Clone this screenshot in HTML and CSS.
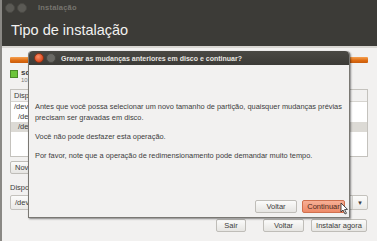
FILE: index.html
```html
<!DOCTYPE html>
<html lang="pt-BR">
<head>
    <meta charset="UTF-8">
    <title>Instalação</title>
    <link rel="stylesheet" href="styles.css">
</head>
<body>
    <div class="window">
        <div class="titlebar">
            <span class="tb-btn"></span>
            <span class="tb-btn"></span>
            <span class="tb-title">Instalação</span>
        </div>
        <div class="header">Tipo de instalação</div>
        <div class="content">
            <div class="usage-bar"></div>
            <div class="legend">
                <span class="swatch"></span>
                <div class="legend-text">
                    <div class="legend-name">sda1</div>
                    <div class="legend-size">10.0 GB</div>
                </div>
            </div>
            <div class="table">
                <div class="table-head">Dispositivo</div>
                <div class="row">/dev/sda</div>
                <div class="row sub">/dev/sda1</div>
                <div class="row sub selected">/dev/sda5</div>
                <div class="row"></div>
            </div>
            <div class="tools">
                <span class="btn">Nova tabela</span>
            </div>
            <div class="label">Dispositivo</div>
            <div class="combo">
                <span>/dev/sda</span>
                <span class="arrow">▾</span>
            </div>
        </div>
        <div class="footer">
            <span class="btn quit">Sair</span>
            <span class="btn back">Voltar</span>
            <span class="btn install">Instalar agora</span>
        </div>
    </div>

    <div class="dialog">
        <div class="dlg-titlebar">
            <span class="dlg-close"></span>
            <span class="dlg-min"></span>
            <span class="dlg-title">Gravar as mudanças anteriores em disco e continuar?</span>
        </div>
        <div class="dlg-body">
            <p>Antes que você possa selecionar um novo tamanho de partição, quaisquer mudanças prévias precisam ser gravadas em disco.</p>
            <p>Você não pode desfazer esta operação.</p>
            <p>Por favor, note que a operação de redimensionamento pode demandar muito tempo.</p>
        </div>
        <div class="dlg-buttons">
            <span class="btn dlg-back">Voltar</span>
            <span class="btn dlg-next">Continuar</span>
        </div>
        <svg class="cursor" width="9" height="13" viewBox="0 0 9 13">
            <path d="M1 1 L1 10 L3 8 L5 12 L6.5 11.3 L4.6 7.6 L7.5 7.4 Z" fill="#fff" stroke="#222" stroke-width="0.8"/>
        </svg>
    </div>
</body>
</html>
```

FILE: styles.css
```css
body {
    margin: 0;
    padding: 0;
    width: 377px;
    height: 241px;
    overflow: hidden;
    font-family: 'Liberation Sans', 'DejaVu Sans', sans-serif;
    background: #f2f1f0;
    position: relative;
}

.window {
    width: 377px;
    height: 241px;
    display: flex;
    flex-direction: column;
    background: #f2f1f0;
    border-left: 2px solid #8a8884;
    box-sizing: border-box;
}

.titlebar {
    height: 15px;
    background: #3c3b37;
    display: flex;
    align-items: center;
    padding-left: 3px;
    gap: 2px;
}

.tb-btn {
    width: 8px;
    height: 8px;
    border-radius: 50%;
    background: #5b5a55;
    border: 1px solid #4a4944;
}

.tb-title {
    font-size: 7.5px;
    font-weight: bold;
    color: #77756f;
    margin-left: 9px;
    letter-spacing: 0.2px;
}

.header {
    height: 31px;
    background: #3c3b37;
    color: #f2f1f0;
    font-size: 14.5px;
    padding-left: 9px;
    line-height: 30px;
    border-bottom: 2px solid #d8d6d2;
}

.content {
    flex: 1;
    padding: 9px 9px 0 8px;
    display: flex;
    flex-direction: column;
}

.usage-bar {
    height: 6px;
    background: linear-gradient(#f5a050, #dd6a10 60%, #c85c0c);
    border-radius: 1px;
}

.legend {
    display: flex;
    gap: 3px;
    margin-top: 5px;
    height: 21px;
}

.swatch {
    width: 6px;
    height: 6px;
    margin-top: 2px;
    background: #6cc43a;
    border: 1px solid #4a8a28;
}

.legend-name {
    font-size: 8px;
    font-weight: bold;
    color: #3c3c3c;
}

.legend-size {
    font-size: 6px;
    color: #777;
}

.table {
    height: 66px;
    border: 1px solid #c4c2bd;
    background: #fff;
    font-size: 7.5px;
    color: #3c3c3c;
}

.table-head {
    height: 11px;
    line-height: 11px;
    padding-left: 3px;
    background: #f2f1f0;
    border-bottom: 1px solid #d6d4cf;
}

.row {
    height: 10px;
    line-height: 10px;
    padding-left: 3px;
}

.row.sub {
    padding-left: 7px;
}

.row.selected {
    background: #dcdad5;
}

.tools {
    margin-top: 4px;
    display: flex;
}

.btn {
    display: inline-flex;
    align-items: center;
    justify-content: center;
    height: 11px;
    padding: 0 4px;
    font-size: 7.5px;
    color: #3c3c3c;
    background: linear-gradient(#fbfbfa, #e6e5e2);
    border: 1px solid #bfbdb8;
    border-radius: 2px;
    box-sizing: content-box;
}

.label {
    margin-top: 9px;
    font-size: 7.5px;
    color: #3c3c3c;
}

.combo {
    margin-top: 3px;
    height: 13px;
    display: flex;
    align-items: center;
    justify-content: space-between;
    padding-left: 4px;
    font-size: 7.5px;
    color: #3c3c3c;
    background: linear-gradient(#fbfbfa, #ebeae7);
    border: 1px solid #c4c2bd;
    border-radius: 2px;
}

.arrow {
    width: 14px;
    height: 13px;
    line-height: 13px;
    text-align: center;
    font-size: 7px;
    border-left: 1px solid #d6d4cf;
}

.footer {
    height: 22px;
    display: flex;
    justify-content: flex-end;
    align-items: flex-start;
    padding-right: 10px;
}

.footer .quit {
    width: 20px;
}

.footer .back {
    width: 31px;
    margin-left: 17px;
}

.footer .install {
    width: 46px;
    margin-left: 7px;
}

/* janela de diálogo por cima */
.dialog {
    position: absolute;
    left: 28px;
    top: 51px;
    width: 322px;
    height: 167px;
    background: #f2f1f0;
    border: 1px solid #7a7873;
    border-top: none;
    border-radius: 4px 4px 0 0;
    box-shadow: 1px 1px 2px rgba(0, 0, 0, 0.45);
    box-sizing: border-box;
    display: flex;
    flex-direction: column;
}

.dlg-titlebar {
    height: 14px;
    background: linear-gradient(#4a4944, #3c3b37);
    border-radius: 4px 4px 0 0;
    display: flex;
    align-items: center;
    padding-left: 5px;
    gap: 2px;
}

.dlg-close {
    width: 8px;
    height: 8px;
    border-radius: 50%;
    background: radial-gradient(circle at 40% 35%, #f7906a, #df4a1e 70%);
    border: 1px solid #8a3318;
}

.dlg-min {
    width: 8px;
    height: 8px;
    border-radius: 50%;
    background: #6b6a65;
    border: 1px solid #4a4944;
}

.dlg-title {
    margin-left: 3px;
    font-size: 7px;
    font-weight: bold;
    color: #e8e6e2;
}

.dlg-body {
    flex: 1;
    padding: 36px 6px 0 6px;
    font-size: 7.4px;
    color: #3c3c3c;
    line-height: 11px;
}

.dlg-body p {
    margin: 0 0 8px 0;
}

.dlg-buttons {
    display: flex;
    justify-content: flex-end;
    gap: 5px;
    padding: 0 4px 4px 0;
}

.dlg-back {
    width: 32px;
}

.dlg-next {
    width: 33px;
    background: linear-gradient(#f7b096, #ee8a68);
    border-color: #d0704e;
    color: #4a2a20;
}

.cursor {
    position: absolute;
    right: 0;
    bottom: 2px;
}
```
